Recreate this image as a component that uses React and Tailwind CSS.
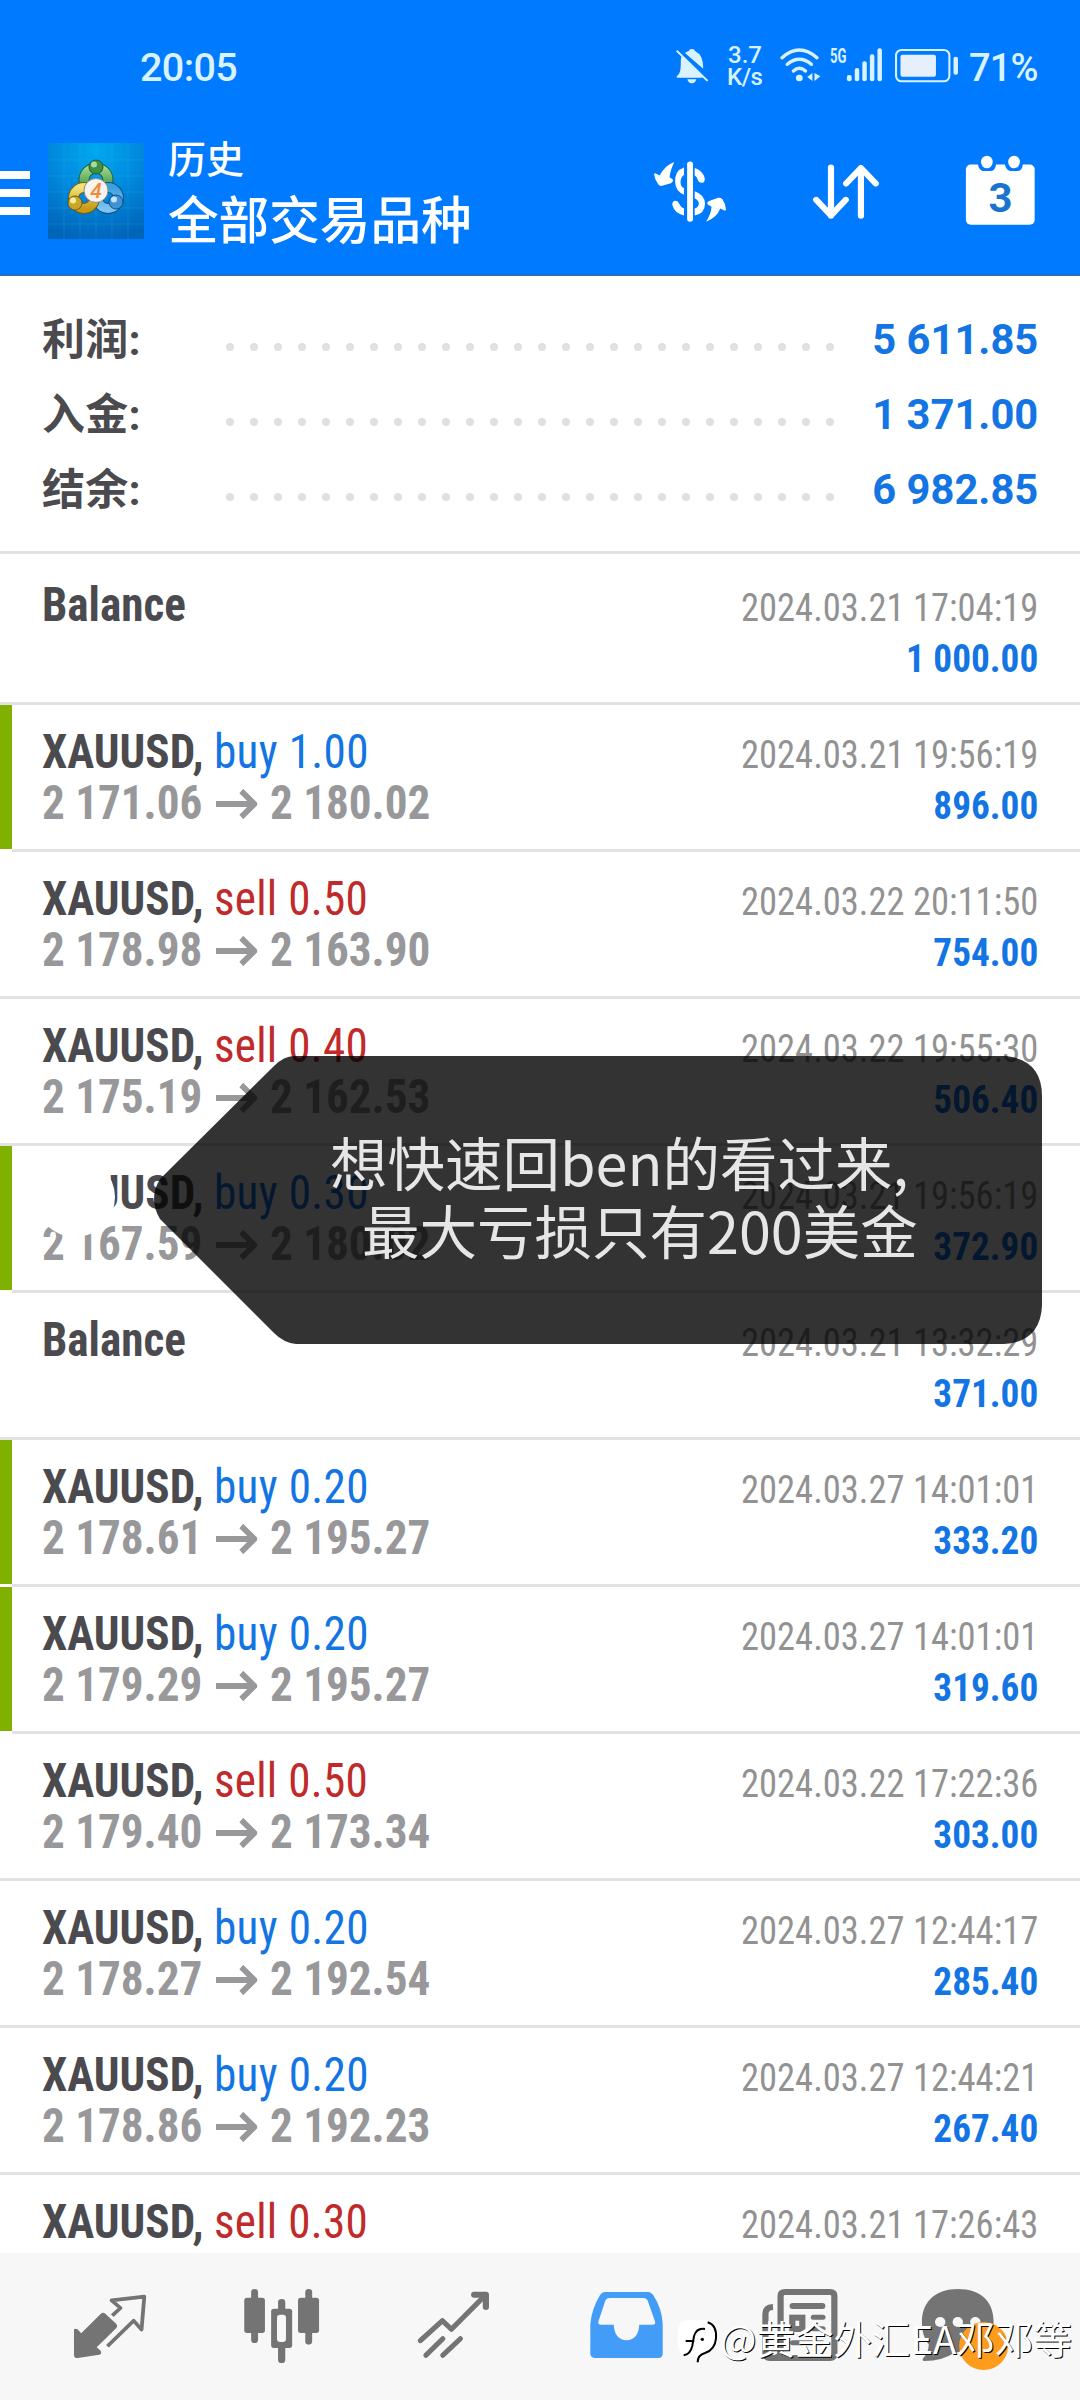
import React from 'react';

const summary = [
    { label: '利润:', value: '5 611.85' },
    { label: '入金:', value: '1 371.00' },
    { label: '结余:', value: '6 982.85' },
];

const deals = [
    { type: 'balance', time: '2024.03.21 17:04:19', profit: '1 000.00' },
    { type: 'buy', volume: '1.00', open: '2 171.06', close: '2 180.02', time: '2024.03.21 19:56:19', profit: '896.00', tp: true },
    { type: 'sell', volume: '0.50', open: '2 178.98', close: '2 163.90', time: '2024.03.22 20:11:50', profit: '754.00' },
    { type: 'sell', volume: '0.40', open: '2 175.19', close: '2 162.53', time: '2024.03.22 19:55:30', profit: '506.40' },
    { type: 'buy', volume: '0.30', open: '2 167.59', close: '2 180.02', time: '2024.03.21 19:56:19', profit: '372.90', tp: true },
    { type: 'balance', time: '2024.03.21 13:32:29', profit: '371.00' },
    { type: 'buy', volume: '0.20', open: '2 178.61', close: '2 195.27', time: '2024.03.27 14:01:01', profit: '333.20', tp: true },
    { type: 'buy', volume: '0.20', open: '2 179.29', close: '2 195.27', time: '2024.03.27 14:01:01', profit: '319.60', tp: true },
    { type: 'sell', volume: '0.50', open: '2 179.40', close: '2 173.34', time: '2024.03.22 17:22:36', profit: '303.00' },
    { type: 'buy', volume: '0.20', open: '2 178.27', close: '2 192.54', time: '2024.03.27 12:44:17', profit: '285.40' },
    { type: 'buy', volume: '0.20', open: '2 178.86', close: '2 192.23', time: '2024.03.27 12:44:21', profit: '267.40' },
    { type: 'sell', volume: '0.30', time: '2024.03.21 17:26:43' },
];

const StatusBar = () => (
    <div className="flex h-[134px] items-center pl-[140px] text-[#d8f2ff]">
        <span className="w-[536px] pt-[2px] text-[39.5px] font-medium leading-[40px] tracking-[-0.6px]">20:05</span>
        {/* Muted bell, 676..712 */}
        <svg className="h-[40px] w-[51px]" viewBox="394 80 148 120" preserveAspectRatio="none" fill="currentColor">
            <path d="M398 166 C408 160 408 140 408 120 Q408 112 411 106 L465 160 L472 172 H398 Q392 170 398 166Z" />
            <path d="M420 98 Q426 93 431 92 Q432 86 440 86 Q448 86 450 93 Q474 104 473 145 Z" />
            <path d="M427 177 H453 Q450 189 440 189 Q430 189 427 177Z" />
            <path d="M398 93 L484 180" stroke="currentColor" strokeWidth="6" strokeLinecap="round" />
        </svg>
        <span className="w-[53px] pb-[3px] text-[24px] font-medium leading-[22px]">
            <span className="block pl-[1px]">3.7</span>
            <span className="block tracking-[-0.5px]">K/s</span>
        </span>
        {/* Wifi, 780..822 */}
        <svg className="h-[40px] w-[50px]" viewBox="697 80 145 120" preserveAspectRatio="none" fill="none" stroke="currentColor" strokeWidth="10" strokeLinecap="round">
            <path d="M703 112 Q753 66 804 112" />
            <path d="M718 132 Q753 102 788 132" />
            <path d="M736 152 Q753 136 771 152" />
            <circle cx="753" cy="173" r="10" fill="currentColor" stroke="none" />
            <path d="M791 158 V182 L776 170Z M797 158 L814 168 L797 182Z" fill="currentColor" stroke="none" />
        </svg>
        {/* Signal bars with network type, 830..884 */}
        <svg className="h-[40px] w-[65px]" viewBox="842 80 189 120" preserveAspectRatio="none" fill="currentColor">
            <text x="842" y="129" fontSize="62" fontWeight="700" fontFamily="Roboto" textLength="48" lengthAdjust="spacingAndGlyphs">5G</text>
            <rect x="891" y="164" width="14" height="19" rx="6" />
            <rect x="914" y="143" width="13" height="40" rx="6" />
            <rect x="936" y="123" width="13" height="60" rx="6" />
            <rect x="958" y="102" width="13" height="81" rx="6" />
            <rect x="980" y="84" width="13" height="99" rx="6" />
        </svg>
        {/* Battery, 895..958 */}
        <svg className="h-[40px] w-[74px]" viewBox="1031 80 215 120" preserveAspectRatio="none" fill="none">
            <rect x="1034" y="89" width="155" height="94" rx="16" stroke="currentColor" strokeWidth="6" />
            <rect x="1047" y="103" width="103" height="66" rx="6" fill="#e6effc" />
            <rect x="1201" y="109" width="13" height="54" rx="6" fill="currentColor" />
        </svg>
        <span className="pt-[1px] text-[38px] font-medium leading-[40px] tracking-[-0.9px]">71%</span>
    </div>
);

const AppLogo = () => (
    <svg className="h-[96px] w-[96px] shrink-0" viewBox="0 0 96 96">
        <defs>
            <radialGradient id="sky" cx="0.5" cy="0.08" r="0.95">
                <stop offset="0" stopColor="#00a9f0" />
                <stop offset="0.5" stopColor="#0088dc" />
                <stop offset="1" stopColor="#0064b8" />
            </radialGradient>
            <linearGradient id="green" x1="0" y1="0" x2="0" y2="1">
                <stop offset="0" stopColor="#9bd48a" />
                <stop offset="1" stopColor="#2c8a34" />
            </linearGradient>
            <linearGradient id="gold" x1="0" y1="0" x2="0" y2="1">
                <stop offset="0" stopColor="#f3e27a" />
                <stop offset="1" stopColor="#c99b12" />
            </linearGradient>
            <linearGradient id="azure" x1="0" y1="0" x2="0" y2="1">
                <stop offset="0" stopColor="#3d9fe0" />
                <stop offset="1" stopColor="#7cc4f2" />
            </linearGradient>
        </defs>
        <rect width="96" height="96" fill="url(#sky)" />
        <path d="M0 17H96 M0 33H96 M0 49H96 M0 65H96 M0 81H96 M16 0V96 M32 0V96 M48 0V96 M64 0V96 M80 0V96" stroke="#3bb5f0" strokeOpacity="0.2" />
        <g fill="none">
            <circle cx="48" cy="37" r="12" stroke="#1f5d35" strokeWidth="11" />
            <circle cx="48" cy="37" r="12" stroke="url(#green)" strokeWidth="9" />
            <circle cx="60" cy="55" r="10.5" stroke="#124f85" strokeWidth="11" />
            <circle cx="60" cy="55" r="10.5" stroke="url(#azure)" strokeWidth="9" />
            <circle cx="36" cy="55" r="10.5" stroke="#6f5d10" strokeWidth="11" />
            <circle cx="36" cy="55" r="10.5" stroke="url(#gold)" strokeWidth="9" />
        </g>
        <circle cx="48" cy="24" r="7" fill="#3f8f45" stroke="#1f5d35" />
        <circle cx="46" cy="21.5" r="3" fill="#a9dba0" />
        <circle cx="27" cy="60" r="7" fill="#c9a52a" stroke="#6f5d10" />
        <circle cx="25" cy="57.5" r="3" fill="#f7eda2" />
        <circle cx="68" cy="59" r="7" fill="#3f92d4" stroke="#124f85" />
        <circle cx="66" cy="56.5" r="3" fill="#c3e4fb" />
        <circle cx="48" cy="47.5" r="12" fill="#f7f3ee" stroke="#8d8a78" />
        <text x="48" y="55" textAnchor="middle" fontSize="21" fontStyle="italic" fontFamily="Roboto" fontWeight="500" fill="#f08a3c">4</text>
    </svg>
);

const AppBar = () => (
    <div className="flex h-[114px] items-center text-white">
        <div className="flex w-[48px] flex-col gap-[10px] pt-[4px]">
            <div className="h-[8px] w-[30px] bg-white"></div>
            <div className="h-[8px] w-[30px] bg-white"></div>
            <div className="h-[8px] w-[30px] bg-white"></div>
        </div>
        <AppLogo />
        <div className="w-[486px] pl-[24px] pt-[4px] font-medium">
            <div className="text-[38px] leading-[57px]">历史</div>
            <div className="text-[50.6px] leading-[65px]">全部交易品种</div>
        </div>
        {/* Currency exchange, 654..726 */}
        <svg className="h-[80px] w-[159px]" viewBox="261 393 462 241" preserveAspectRatio="none" fill="white">
            <rect x="427" y="425" width="17" height="181" rx="8" />
            <path d="M418 443 Q391 452 392 486 Q393 515 418 525 V505 Q407 500 408 484 Q409 470 418 465Z" />
            <path d="M449 444 Q472 452 478 474 Q480 489 468 489 Q461 489 458 480 Q455 470 449 467Z" />
            <path d="M449 514 Q478 524 479 552 Q478 583 449 587 V566 Q461 562 461 551 Q460 540 449 536Z" />
            <path d="M418 587 Q391 582 384 556 Q383 543 394 543 Q400 543 404 552 Q408 563 418 566Z" />
            <path d="M390 426 Q378 450 376 472 L385 478 Q388 485 380 490 L354 498 Q346 499 343 493 Q332 478 331 463 Q332 458 339 462 L347 467 Q362 436 390 426Z" />
            <path d="M482 606 Q496 584 498 561 L487 554 Q483 548 491 544 L517 534 Q526 532 530 539 Q540 554 540 569 Q538 575 532 571 L523 566 Q514 593 482 606Z" />
        </svg>
        {/* Sort, 813..879 */}
        <svg className="h-[80px] w-[159px]" viewBox="723 393 462 241" preserveAspectRatio="none" fill="none" stroke="white" strokeWidth="18" strokeLinecap="round" strokeLinejoin="round">
            <path d="M845 443 V588 M802 540 L845 587 L888 540" />
            <path d="M932 588 V445 M889 491 L932 444 L975 491" />
        </svg>
        {/* Calendar, 966..1035 */}
        <svg className="h-[80px] w-[130px]" viewBox="1185 393 378 241" preserveAspectRatio="none">
            <rect x="1237" y="434" width="200" height="181" rx="14" fill="white" />
            <path d="M1272 430 H1325 Q1323 453 1310 453 H1286 Q1273 450 1272 430Z M1350 430 H1403 Q1401 453 1389 453 H1365 Q1352 450 1350 430Z" fill="#007aff" />
            <ellipse cx="1298" cy="426" rx="17" ry="19" fill="white" />
            <ellipse cx="1377" cy="426" rx="17" ry="19" fill="white" />
            <text x="1338" y="577" textAnchor="middle" fontSize="122" fontWeight="700" fontFamily="Roboto" fill="#1a73d0">3</text>
        </svg>
    </div>
);

const Summary = () => (
    <div className="h-[278px] border-b-[3px] border-[#e2e2e2] pl-[42px] pr-[42px] pt-[26px]">
        {summary.map((item) => (
            <div key={item.label} className="flex h-[75px] items-center font-bold leading-[75px]">
                <span className="w-[184px] pt-[2px] text-[43px] tracking-[0.3px] text-[#4b4b4f]">{item.label}</span>
                <span className="flex gap-[16px] pt-[14px]">
                    {Array.from({ length: 26 }, (_, i) => (
                        <i key={i} className="h-[8px] w-[8px] rounded-full bg-[#e0e0e0]"></i>
                    ))}
                </span>
                <span className="ml-auto origin-right scale-x-[0.992] text-[42px] text-[#1374e4]">{item.value}</span>
            </div>
        ))}
    </div>
);

const Arrow = () => (
    <svg className="mx-[14px] inline-block h-[30px] w-[44px] align-baseline" viewBox="0 0 44 30" fill="none" stroke="#98989b" strokeWidth="6">
        <path d="M0 15 H40 M27 2 L41 15 L27 28" />
    </svg>
);

const DealRow = ({ deal }) => (
    <div className="flex h-[147px] shrink-0">
        <div className={deal.tp ? 'h-[144px] w-[12px] bg-[#80b000]' : 'w-[12px] border-b-[3px] border-[#e2e2e2]'}></div>
        <div className="flex flex-1 justify-between border-b-[3px] border-[#e2e2e2] pl-[30px] pr-[42px] font-['Roboto_Condensed','Roboto',sans-serif] font-stretch-condensed">
            <div className="origin-left scale-x-[0.94] pt-[21px] text-[48px] leading-[51px] whitespace-nowrap">
                {deal.type === 'balance' ? (
                    <div className="font-bold text-[#4b4b4f]">Balance</div>
                ) : (
                    <div>
                        <span className="font-bold text-[#4b4b4f]">XAUUSD, </span>
                        <span className={deal.type === 'buy' ? 'tracking-[0.4px] text-[#1374e4]' : 'tracking-[0.3px] text-[#c02a2a]'}>
                            {deal.type} {deal.volume}
                        </span>
                    </div>
                )}
                {deal.open && (
                    <div className="font-bold text-[#98989b]">
                        {deal.open}
                        <Arrow />
                        {deal.close}
                    </div>
                )}
            </div>
            <div className="pt-[25px] text-right text-[39px] leading-[51px]">
                <div className="origin-right scale-x-[0.937] text-[#929292]">{deal.time}</div>
                {deal.profit && <div className="origin-right scale-x-[0.955] font-bold text-[#1374e4]">{deal.profit}</div>}
            </div>
        </div>
    </div>
);

// Speech bubble pasted over the list, with its pointer on the left
const Callout = () => (
    <div className="absolute left-[30px] top-[1056px] h-[288px] w-[1012px]">
        <svg className="absolute inset-0 h-full w-full" viewBox="-8 0 1012 288">
            <circle cx="37" cy="141" r="40" fill="white" />
            <path d="M256 0 H968 Q1004 4 1004 40 V250 Q1002 286 966 288 H258 Q246 287 236 277 L122 163 Q110 143 122 123 L236 10 Q246 0 256 0Z" fill="black" fillOpacity="0.8" />
        </svg>
        <div className="relative pt-[71px] text-[57.5px] leading-[68px] text-[#e6e6e6] font-['Noto_Sans_CJK_SC',sans-serif]">
            <div className="pl-[300px]">想快速回ben的看过来,</div>
            <div className="pl-[332px]">最大亏损只有200美金</div>
        </div>
    </div>
);

const BottomNav = () => (
    <div className="relative flex h-[147px] bg-[#f7f7f7] px-[24px] text-[#747474]">
        {/* Quotes */}
        <svg className="h-[147px] w-[172px]" viewBox="70 279 499 441" preserveAspectRatio="none" fill="currentColor">
            <path d="M293 461 Q300 456 306 461 L338 492 Q343 498 338 504 L281 562 L293 573 Q296 583 288 584 L226 594 Q215 595 215 584 V508 Q220 504 225 508 L236 520Z" />
            <path d="M326 467 L350 444 L324 421 L419 410 L411 509 L388 482 L312 559" fill="none" stroke="currentColor" strokeWidth="11" strokeLinejoin="round" />
        </svg>
        {/* Charts */}
        <svg className="h-[147px] w-[172px]" viewBox="569 279 499 441" preserveAspectRatio="none" fill="currentColor">
            <rect x="729" y="387" width="20" height="162" rx="10" />
            <rect x="709" y="413" width="60" height="106" rx="8" />
            <rect x="807" y="417" width="21" height="192" rx="10" />
            <rect x="787" y="446" width="61" height="118" rx="8" />
            <rect x="804" y="464" width="26" height="82" rx="9" fill="#f7f7f7" />
            <rect x="886" y="387" width="20" height="167" rx="10" />
            <rect x="865" y="413" width="61" height="106" rx="8" />
        </svg>
        {/* Trade */}
        <svg className="h-[147px] w-[172px]" viewBox="1069 279 499 441" preserveAspectRatio="none" fill="none" stroke="currentColor" strokeWidth="15" strokeLinecap="round" strokeLinejoin="round">
            <path d="M1221 542 L1285 482 L1311 508 L1410 405" />
            <path d="M1377 404 H1411 V441" strokeWidth="18" />
            <path d="M1237 586 L1286 536 M1286 586 L1337 536" />
        </svg>
        {/* History, the open tab */}
        <svg className="h-[147px] w-[172px]" viewBox="0 279 499 441" preserveAspectRatio="none">
            <path fillRule="evenodd" fill="#439df8" d="M190 396 H314 Q324 397 330 408 Q354 446 356 492 V582 Q355 594 344 594 H158 Q147 593 146 582 V492 Q150 446 174 406 Q180 396 190 396Z M202 414 Q194 414 190 421 L169 486 Q168 494 177 494 H214 Q216 538 251 541 Q286 538 288 494 H326 Q336 494 334 485 L312 421 Q308 414 300 414Z" />
        </svg>
        {/* News */}
        <svg className="h-[147px] w-[172px]" viewBox="500 279 499 441" preserveAspectRatio="none" fill="none" stroke="currentColor" strokeWidth="18">
            <path d="M677 441 Q655 442 655 462 V580 Q655 594 668 594 H842 Q855 594 855 580 V408 Q855 396 842 396 H712 Q699 396 699 408 V575 Q698 590 685 592" strokeLinejoin="round" />
            <path d="M734 438 H820" strokeLinecap="round" />
            <rect x="733" y="473" width="29" height="34" />
            <path d="M794 472 H822 M794 506 H822 M734 548 H820" strokeLinecap="round" strokeWidth="15" />
        </svg>
        {/* Messages with the unread badge */}
        <svg className="h-[147px] w-[172px]" viewBox="999 279 499 441" preserveAspectRatio="none" fill="currentColor">
            <path d="M1213 387 C1280 387 1317 425 1317 485 C1317 545 1275 577 1205 577 Q1170 603 1116 603 Q1108 602 1113 594 Q1128 580 1129 553 C1114 535 1109 510 1109 485 C1109 425 1150 387 1213 387Z" />
            <circle cx="1162" cy="486" r="15" fill="#f7f7f7" />
            <circle cx="1213" cy="486" r="15" fill="#f7f7f7" />
            <circle cx="1264" cy="486" r="15" fill="#f7f7f7" />
            <ellipse cx="1288" cy="558" rx="71" ry="72" fill="#ff9c1b" />
        </svg>
        {/* Author watermark */}
        <div className="absolute left-[677px] top-[55px] flex items-center text-white">
            <svg className="mt-[10px] h-[48px] w-[43px]" viewBox="20 55 129 144">
                <path d="M48 62 H105 Q138 66 138 100 V118 Q134 152 104 162 L84 190 L80 172 H62 Q22 168 22 130 V96 Q24 66 48 62Z" fill="white" />
                <path d="M46 124 H72 M104 88 Q78 84 71 110 L66 138 Q60 164 40 167" fill="none" stroke="black" strokeWidth="6" />
                <path d="M112 68 Q140 76 137 116 Q134 150 104 160 Q82 166 82 188" fill="none" stroke="black" strokeWidth="6" />
                <circle cx="96" cy="119" r="5" fill="black" />
            </svg>
            <span className="text-[38.5px] leading-[50px] whitespace-nowrap [text-shadow:1px_1px_0px_#000] font-['Noto_Sans_CJK_SC',sans-serif]">@黄金外汇EA邓邓等</span>
        </div>
    </div>
);

const App = () => {
    return (
        <div className="relative flex h-[2400px] w-[1080px] flex-col overflow-hidden bg-white font-['Roboto','Noto_Sans_CJK_SC',sans-serif]">
            <header className="h-[276px] shrink-0 border-b-2 border-[#1f6fc4] bg-[#007aff]">
                <StatusBar />
                <AppBar />
            </header>
            <Summary />
            <main className="flex min-h-0 flex-1 flex-col overflow-hidden pt-[4px]">
                {deals.map((deal, index) => (
                    <DealRow key={index} deal={deal} />
                ))}
            </main>
            <BottomNav />
            <Callout />
        </div>
    );
};

export default App;
